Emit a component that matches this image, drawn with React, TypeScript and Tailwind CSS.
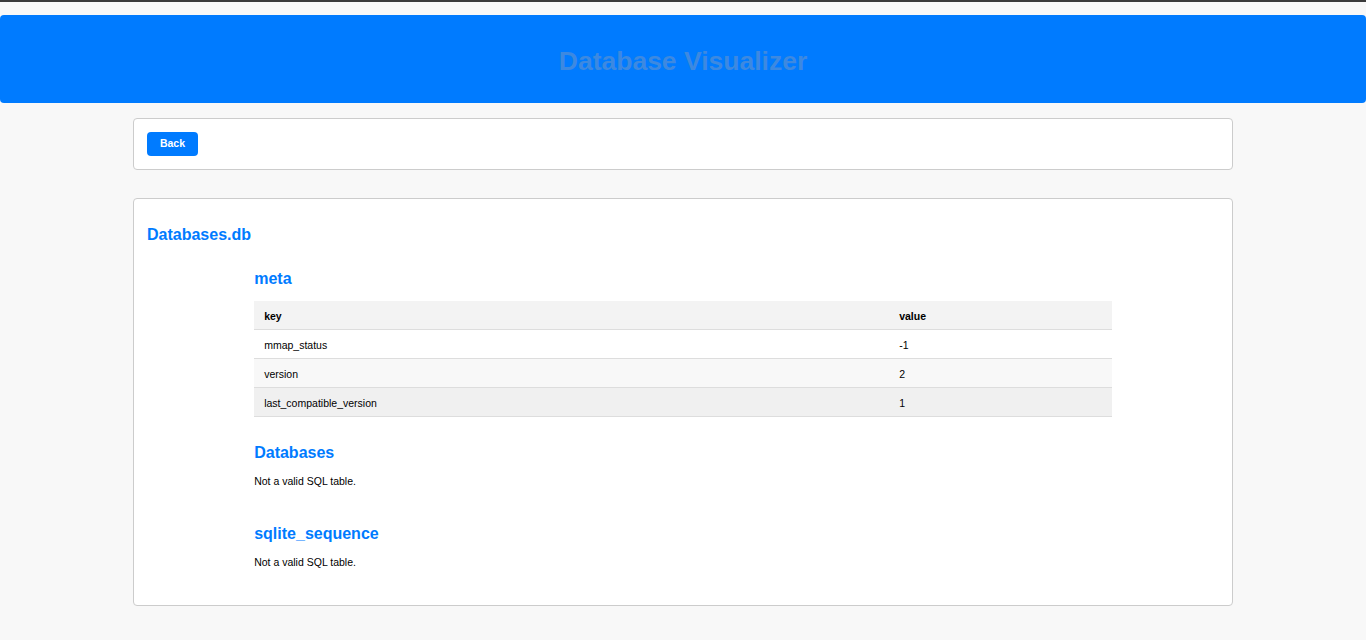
import React from "react";

const ROWS = [
  { key: "mmap_status", value: "-1", bg: "bg-white" },
  { key: "version", value: "2", bg: "bg-[#f8f8f8]" },
  { key: "last_compatible_version", value: "1", bg: "bg-[#f0f0f0]" },
];

function MetaTable() {
  return (
    <table className="w-full border-collapse text-[10.5px] leading-[12px] text-black">
      <thead>
        <tr className="bg-[#f3f3f3]">
          <th className="w-[635px] border-b border-[#dddddd] px-[10px] pt-[9px] pb-[7px] text-left font-bold">key</th>
          <th className="border-b border-[#dddddd] px-[10px] pt-[9px] pb-[7px] text-left font-bold">value</th>
        </tr>
      </thead>
      <tbody>
        {ROWS.map((r) => (
          <tr key={r.key} className={r.bg}>
            <td className="border-b border-[#dddddd] px-[10px] pt-[9px] pb-[7px]">{r.key}</td>
            <td className="border-b border-[#dddddd] px-[10px] pt-[9px] pb-[7px]">{r.value}</td>
          </tr>
        ))}
      </tbody>
    </table>
  );
}

export default function App() {
  return (
    <div
      className="min-h-screen bg-[#f8f8f8] pb-[34px]"
      style={{ fontFamily: '"Liberation Sans", Arial, sans-serif' }}
    >
      <div className="h-[2px] bg-[#3b3b3b]" />
      <header className="mt-[13px] flex h-[88px] items-center justify-center rounded-[4px] bg-[#007bff] pt-[4px]">
        <h1 className="text-[26.5px] font-bold leading-none text-[#3d89e0]">Database Visualizer</h1>
      </header>

      <div className="mx-auto mt-[15px] w-[1100px] rounded-[4px] border border-[#cccccc] bg-white p-[13px]">
        <button className="block h-[24px] w-[51px] rounded-[4px] bg-[#007bff] text-[10.5px] font-bold text-white">
          Back
        </button>
      </div>

      <div className="mx-auto mt-[28px] w-[1100px] rounded-[4px] border border-[#cccccc] bg-white p-[13px]">
        <h2 className="mt-[13.5px] text-[16px] font-bold leading-[18px] text-[#007bff]">Databases.db</h2>

        <div className="ml-[10%] w-[80%]">
          <section className="mt-[26px]">
            <h3 className="text-[16px] font-bold leading-[18px] text-[#007bff]">meta</h3>
            <div className="mt-[13.5px]">
              <MetaTable />
            </div>
          </section>

          <section className="mt-[26.5px]">
            <h3 className="text-[16px] font-bold leading-[18px] text-[#007bff]">Databases</h3>
            <p className="mt-[13px] text-[10.5px] leading-[12px] text-black">Not a valid SQL table.</p>
          </section>

          <section className="mt-[38px]">
            <h3 className="text-[16px] font-bold leading-[18px] text-[#007bff]">sqlite_sequence</h3>
            <p className="mt-[13px] text-[10.5px] leading-[12px] text-black">Not a valid SQL table.</p>
          </section>
        </div>

        <div className="h-[24.5px]" />
      </div>
    </div>
  );
}
